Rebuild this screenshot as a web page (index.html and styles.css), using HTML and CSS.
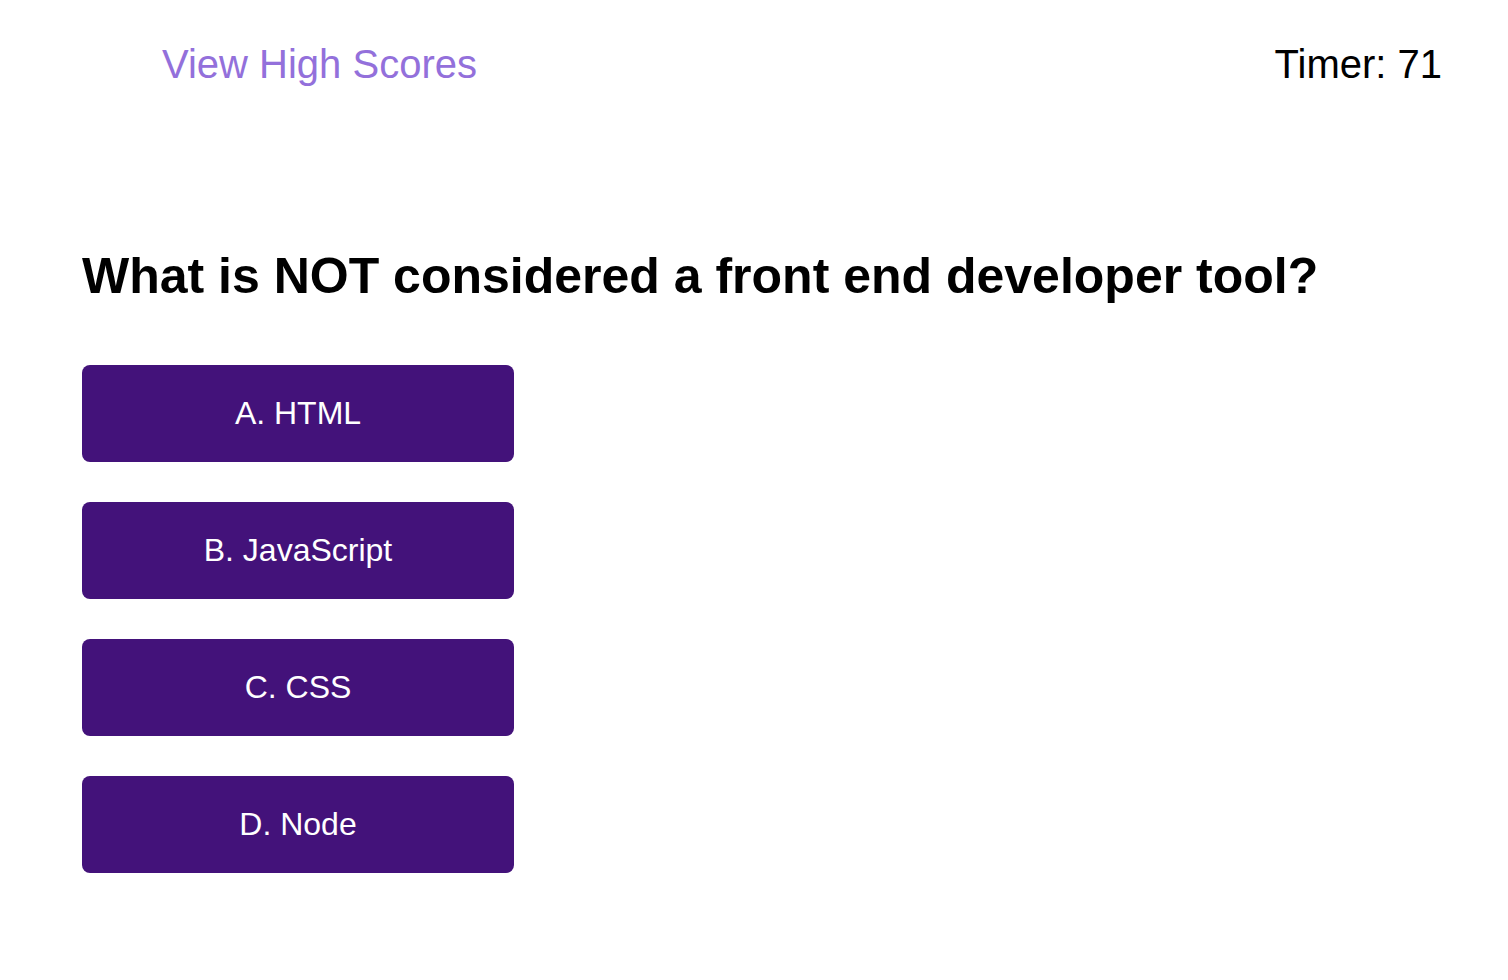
FILE: index.html
```html
<!DOCTYPE html>
<html lang="en">
<head>
<meta charset="utf-8">
<title>Code Quiz</title>
<link rel="stylesheet" href="styles.css">
</head>
<body>
<header class="top-bar">
  <a class="high-scores" href="#">View High Scores</a>
  <div class="timer">Timer: <span>71</span></div>
</header>
<main class="quiz">
  <h1 class="question">What is NOT considered a front end developer tool?</h1>
  <div class="choices">
    <button class="choice">A. HTML</button>
    <button class="choice">B. JavaScript</button>
    <button class="choice">C. CSS</button>
    <button class="choice">D. Node</button>
  </div>
</main>
</body>
</html>
```

FILE: styles.css
```css
html, body {
  margin: 0;
  padding: 0;
  background: #ffffff;
}

body {
  font-family: "Liberation Sans", Arial, Helvetica, sans-serif;
  color: #000000;
}

.top-bar {
  display: flex;
  justify-content: space-between;
  align-items: flex-start;
  padding: 41px 66px 0 162px;
  font-size: 40px;
  line-height: 46px;
}

.high-scores {
  color: #9370db;
  text-decoration: none;
}

.timer {
  color: #000000;
}

.quiz {
  padding: 0 0 0 82px;
}

.question {
  margin: 160px 0 60px 0;
  font-size: 50px;
  line-height: 58px;
  font-weight: 700;
}

.choices {
  display: flex;
  flex-direction: column;
  gap: 40px;
}

.choice {
  width: 432px;
  height: 97px;
  border: none;
  border-radius: 8px;
  background: #43127a;
  color: #ffffff;
  font-family: "Liberation Sans", Arial, Helvetica, sans-serif;
  font-size: 32px;
  padding: 0;
  cursor: pointer;
}
```
